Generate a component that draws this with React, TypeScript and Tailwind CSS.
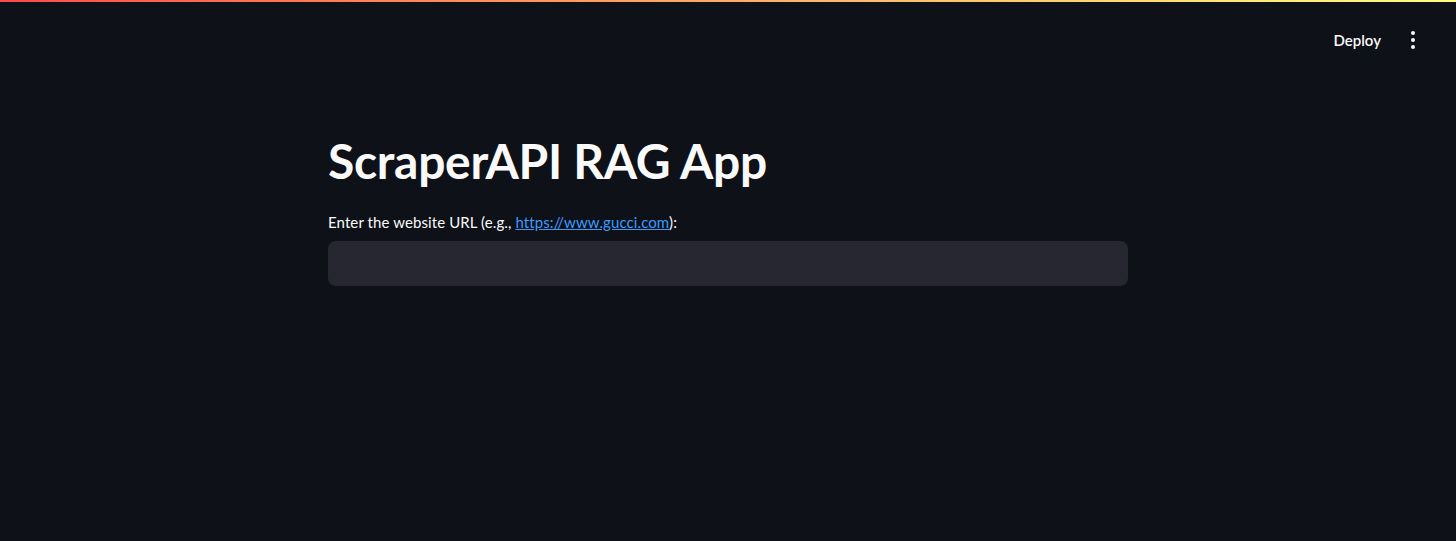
import React from 'react'

export default function App() {
  return (
    <div className="min-h-[541px] w-full bg-[#0e1117] text-[#fafafa]" style={{ fontFamily: '"Lato", "Open Sans", sans-serif' }}>
      {/* top decoration */}
      <div className="h-[2px] w-full bg-gradient-to-r from-[#ff4b4b] to-[#fffd80]" />

      {/* header */}
      <div className="flex h-[58px] items-end justify-end pr-[31px]">
        <div className="flex items-center gap-[8px] pb-[5px]">
          <button className="px-[12px] py-[4px] text-[15px] font-semibold text-[#fafafa]">Deploy</button>
          <button className="flex h-[24px] w-[24px] flex-col items-center justify-center gap-[3px]">
            <span className="block h-[4px] w-[4px] rounded-full bg-[#fafafa]" />
            <span className="block h-[4px] w-[4px] rounded-full bg-[#fafafa]" />
            <span className="block h-[4px] w-[4px] rounded-full bg-[#fafafa]" />
          </button>
        </div>
      </div>

      {/* main */}
      <div className="mx-auto w-[800px] pt-[72px]">
        <h1 className="text-[48px] font-bold leading-[1.2] tracking-[-0.3px] text-[#fafafa]">ScraperAPI RAG App</h1>
        <label className="mt-[22px] block text-[15px] leading-[20px] tracking-[0.1px] text-[#fafafa]">
          Enter the website URL (e.g., <a href="#" className="text-[#3b9cff] underline">https://www.gucci.com</a>):
        </label>
        <input
          type="text"
          className="mt-[9px] block h-[45px] w-full rounded-[8px] border border-transparent bg-[#262730] px-[12px] text-[14px] text-[#fafafa] outline-none"
        />
      </div>
    </div>
  )
}
